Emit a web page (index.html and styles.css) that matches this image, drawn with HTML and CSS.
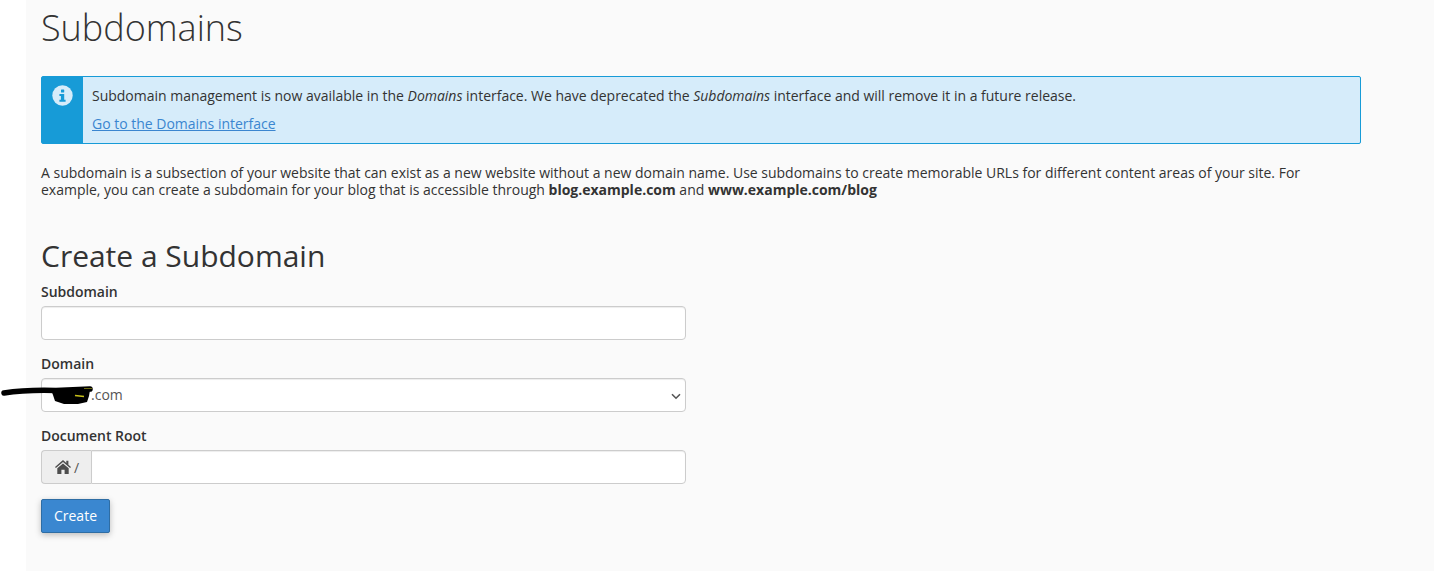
FILE: index.html
```html
<!DOCTYPE html>
<html>
<head>
    <meta charset="utf-8">
    <title>Subdomains</title>
    <link rel="stylesheet" href="styles.css">
</head>
<body>
    <div class="content">
        <h1>Subdomains</h1>
        <div class="alert">
            <div class="alert-icon">
                <svg width="21" height="21" viewBox="0 0 21 21"><circle cx="10.500" cy="10.500" r="10.200" fill="#d6ecfa"/><rect x="9" y="4.600" width="3.200" height="2.800" rx=".5" fill="#179bd7"/><path d="M7.400 9h4.800v5.800h1.400v2H7.400v-2h1.500v-3.800H7.400z" fill="#179bd7"/></svg>
            </div>
            <div class="alert-body">
                <p>Subdomain management is now available in the <em>Domains</em> interface. We have deprecated the <em>Subdomains</em> interface and will remove it in a future release.</p>
                <a href="#">Go to the Domains interface</a>
            </div>
        </div>
        <p class="intro">A subdomain is a subsection of your website that can exist as a new website without a new domain name. Use subdomains to create memorable URLs for different content areas of your site. For example, you can create a subdomain for your blog that is accessible through <b>blog.example.com</b> and <b>www.example.com/blog</b></p>
        <h2>Create a Subdomain</h2>
        <form class="form">
            <div class="field">
                <label for="sub">Subdomain</label>
                <input id="sub" class="control" type="text">
            </div>
            <div class="field">
                <label for="dom">Domain</label>
                <div class="select-wrap">
                    <select id="dom" class="control"><option>&nbsp;&nbsp;&nbsp;&nbsp;&nbsp;&nbsp;&nbsp;&nbsp;&nbsp;&nbsp;&nbsp;.com</option></select>
                    <svg class="chevron" width="10" height="7" viewBox="0 0 10 7"><path d="M1 1.200L5 5.200L9 1.200" fill="none" stroke="#555" stroke-width="1.600"/></svg>
                    <svg class="scribble" width="96" height="28" viewBox="0 0 96 28"><path d="M4 13C20 10.500 38 10 56 10.500L90 9" fill="none" stroke="#000" stroke-width="5.500" stroke-linecap="round"/><path d="M51 10h39l-1 6-2 6-9 2-14 0-9-3-2-6z" fill="#000"/><path d="M75 15.500l9 1" stroke="#c9c21a" stroke-width="1.500"/><path d="M84 8.500h8" stroke="#6b6a10" stroke-width="1"/></svg>
                </div>
            </div>
            <div class="field">
                <label for="root">Document Root</label>
                <div class="input-group">
                    <span class="addon">
                        <svg width="16" height="14" viewBox="0 0 16 14"><path d="M8 0L0 7l.9 1.100L8 2.100l7.100 6 .9-1.100-2.600-2.200V.8h-2.100v2.200z" fill="#4d4d4d"/><path d="M8 3.400L2.300 8.200V14h4.100V9.800h3.200V14h4.100V8.200z" fill="#4d4d4d"/></svg>
                        <span>/</span>
                    </span>
                    <input id="root" class="control" type="text">
                </div>
            </div>
            <button class="btn" type="button">Create</button>
        </form>
    </div>
</body>
</html>
```

FILE: styles.css
```css
* { box-sizing: border-box; }
html, body { margin: 0; padding: 0; }
body { background: #fff; color: #333; font-family: "Open Sans", sans-serif; font-size: 14px; line-height: 17px; letter-spacing: -0.012px; }

.content { margin-left: 26px; padding: 0 73px 38px 15px; background: #fafafa; height: 571px; }

h1 { margin: 0; padding-top: 6px; height: 76px; font-size: 36px; line-height: 43px; font-weight: 300; }
h2 { margin: 40px 0 0; font-size: 30px; line-height: 36px; font-weight: 400; }

.alert { display: flex; height: 68px; background: #d6ecfa; border: 1px solid #179bd7; border-radius: 2px; }
.alert-icon { width: 41px; flex: none; background: #179bd7; display: flex; justify-content: center; padding-top: 8px; }
.alert-body { padding: 10px 9px; }
.alert-body p { margin: 0 0 11px; }
.alert-body a { color: #3b86d0; text-decoration: underline; }

.intro { margin: 20px 0 0; letter-spacing: -0.005px; }

.form { width: 645px; margin-top: 8px; }
.field { margin-bottom: 14px; }
label { display: block; font-weight: 600; margin-bottom: 5px; line-height: 20px; height: 19px; }

.control { display: block; width: 100%; height: 34px; padding: 6px 12px; background: #fff; border: 1px solid #ccc; border-radius: 4px; color: #555; font-family: "Open Sans", sans-serif; font-size: 14px; box-shadow: inset 0 1px 1px rgba(0,0,0,.075); outline: none; }
select.control { padding: 5px 9px 7px; appearance: none; }

.select-wrap { position: relative; }
.chevron { position: absolute; right: 5px; top: 15px; pointer-events: none; }
.scribble { position: absolute; left: -41px; top: 2px; }

.input-group { display: flex; }
.addon { display: flex; align-items: center; gap: 3px; width: 50px; flex: none; padding-left: 13px; background: #eee; border: 1px solid #ccc; border-right: 0; border-radius: 4px 0 0 4px; color: #555; }
.input-group .control { border-radius: 0 4px 4px 0; }

.btn { display: block; height: 34px; width: 69px; margin-top: 15px; padding: 0 0 2px; background: #3a87d0; border: 1px solid #2e6da4; border-radius: 2px; color: #fff; font-family: "Open Sans", sans-serif; font-size: 14px; box-shadow: 0 2px 6px rgba(0,0,0,.25); }
```
